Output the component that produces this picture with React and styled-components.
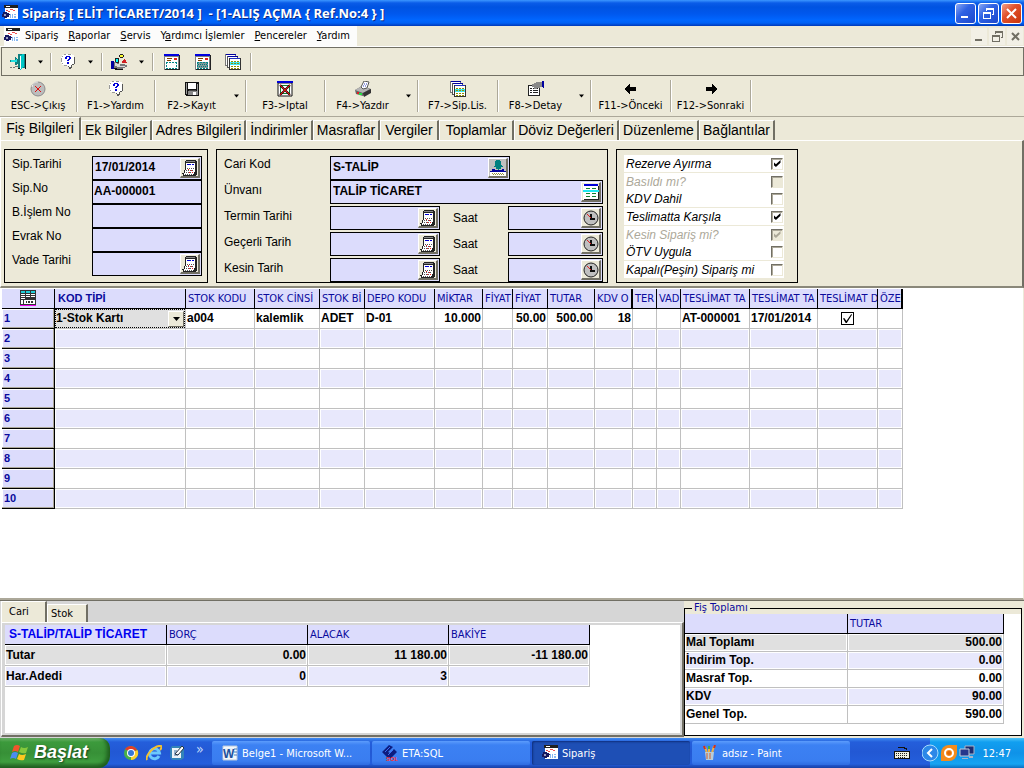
import { useState } from "react"
import styled, { createGlobalStyle, css } from "styled-components"

const GlobalStyle = createGlobalStyle`
*{
box-sizing:border-box;
}
body{
margin:0;
background-color:#ece9d8;
font-family:"DejaVu Sans Condensed", Tahoma, sans-serif;
font-size:11px;
color:black;
}
button, input, select{
font:inherit;
color:inherit;
margin:0;
padding:0;
border-radius:0;
}
svg{
display:block;
flex:none;
}
`

const arial = css`
font-family:"Liberation Sans", Arial, sans-serif;
`

const Window = styled.div`
min-height:100vh;
display:flex;
flex-direction:column;
`

/* title bar */
const TitleBar = styled.header`
height:26px;
display:flex;
align-items:center;
gap:4px;
padding:0 2px;
background:linear-gradient(#3c96ff 0, #0a5ce8 3px, #0053e1 7px, #0058ee 14px, #0066ff 20px, #0061f5 23px, #0038b8 26px);
`
const Title = styled.h1`
flex:1;
margin:0;
font-family:"Open Sans", "Trebuchet MS", sans-serif;
font-size:13px;
font-weight:700;
line-height:20px;
color:white;
white-space:pre;
text-shadow:1px 1px #0a2a86;
`
const WindowButtons = styled.div`
display:flex;
gap:2px;
`
const WindowButton = styled.button`
width:21px;
height:21px;
display:flex;
align-items:center;
justify-content:center;
border:1px solid white;
border-radius:3px;
background:${props=>props.$close
    ? "linear-gradient(135deg, #f0a08c, #e2522c 40%, #c8350c)"
    : "linear-gradient(135deg, #8aa8f4, #2f62e4 40%, #1c48cc)"};
`

/* menu */
const MenuBar = styled.nav`
height:21px;
display:flex;
align-items:center;
justify-content:space-between;
border-bottom:1px solid white;
padding-right:1px;
`
const MenuList = styled.div`
height:20px;
display:flex;
align-items:center;
gap:10px;
margin-left:4px;
padding-right:7px;
background-color:#fcfcfb;
`
const MenuItem = styled.button`
display:flex;
align-items:center;
gap:5px;
border:none;
background:none;
line-height:16px;
white-space:nowrap;
`
const ChildButton = styled.button`
width:16px;
height:17px;
display:flex;
align-items:center;
justify-content:center;
border:none;
background-color:#f2f0e6;
`
const ChildButtons = styled.div`
display:flex;
gap:2px;
`

/* toolbars */
const SmallToolbar = styled.div`
height:29px;
display:flex;
align-items:center;
margin-left:1px;
border:1px solid #716f64;
`
const SmallTool = styled.div`
width:${props=>props.$w}px;
height:18px;
display:flex;
align-items:center;
justify-content:center;
gap:12px;
border-right:1px solid #aca899;
box-shadow:${props=>props.$line ? "1px 0 white" : "none"};
border-right-color:${props=>props.$line ? "#aca899" : "transparent"};
`
const PlainButton = styled.button`
display:flex;
border:none;
background:none;
`
const BigToolbar = styled.div`
height:41px;
display:flex;
align-items:flex-start;
padding-top:4px;
border-bottom:1px solid #aca899;
`
const BigTool = styled.div`
width:${props=>props.$w}px;
height:32px;
display:flex;
align-items:center;
border-right:1px solid #aca899;
box-shadow:1px 0 white;
`
const ToolButton = styled.button`
flex:1;
height:32px;
display:flex;
flex-direction:column;
align-items:center;
gap:2px;
padding-top:1px;
border:none;
background:none;
line-height:14px;
white-space:nowrap;
`
const DropButton = styled(PlainButton)`
padding:4px 6px;
`

/* page tabs */
const Tabs = styled.div`
height:23px;
display:flex;
align-items:flex-end;
${arial}
font-size:14px;
`
const Tab = styled.button`
width:${props=>props.$w}px;
height:${props=>props.$active ? 23 : 20}px;
padding-bottom:${props=>props.$active ? 2 : 1}px;
border:none;
border-top:1px solid white;
border-left:1px solid white;
border-right:2px solid #716f64;
background-color:#ece9d8;
white-space:nowrap;
`
const FormPage = styled.form`
display:flex;
align-items:flex-start;
gap:8px;
padding:8px 3px 3px;
border:1px solid white;
border-right:2px solid #716f64;
border-bottom:2px solid #8a887a;
${arial}
font-size:12px;
`
const Group = styled.div`
height:134px;
padding:${props=>props.$pad};
border:1px solid black;
`
const Line = styled.div`
height:24px;
display:flex;
margin-bottom:${props=>props.$gap||0}px;
`
const Label = styled.label`
width:${props=>props.$w}px;
line-height:${props=>props.$lh||16}px;
font-size:12px;
padding-left:${props=>props.$indent||0}px;
white-space:nowrap;
`
const Field = styled.div`
width:${props=>props.$w}px;
height:24px;
display:flex;
border:1px solid black;
background-color:#dcdcfc;
`
const FieldInput = styled.input`
flex:1;
min-width:0;
padding:0 0 2px ${props=>props.$indent||2}px;
border:none;
outline:none;
background:none;
font-weight:bold;
`
const FieldButton = styled.button`
width:20px;
height:20px;
margin:1px 1px 0 0;
display:flex;
align-items:center;
justify-content:center;
border:1px solid white;
border-right:2px solid #716f64;
border-bottom:2px solid #716f64;
background-color:${props=>props.$grey ? "#c0c0c0" : "#ece9d8"};
`
const OptionList = styled.div`
width:160px;
`
const Option = styled.label`
height:${props=>props.$line ? 18 : 17}px;
display:flex;
align-items:center;
justify-content:space-between;
padding:0 1px 0 2px;
border-bottom:${props=>props.$line ? "1px solid #ece9d8" : "none"};
background-color:white;
font-style:italic;
font-size:12px;
color:${props=>props.$off ? "#aca899" : "black"};
`
const CheckBox = styled.input`
appearance:none;
width:12px;
height:12px;
display:flex;
align-items:center;
justify-content:center;
border:1px solid #ece9d8;
border-top:1px solid #716f64;
border-left:1px solid #716f64;
box-shadow:inset 1px 1px #aca899;
background-color:${props=>props.disabled ? "#ece9d8" : "white"};
&:checked::before{
content:"";
width:7px;
height:7px;
background-color:${props=>props.disabled ? "#aca899" : "black"};
clip-path:polygon(0 30%, 35% 62%, 100% 0, 100% 40%, 35% 100%, 0 70%);
}
`

/* order lines */
const GridArea = styled.main`
flex:1;
padding:1px 0 0 2px;
border-right:1px solid #ece9d8;
border-bottom:2px solid #aca899;
background-color:white;
overflow:auto;
`
const Table = styled.table`
width:${props=>props.$w}px;
table-layout:fixed;
border-collapse:separate;
border-spacing:0;
${arial}
font-size:12px;
font-weight:bold;
`
const Head = styled.th`
height:${props=>props.$h}px;
padding:0 0 1px ${props=>props.$indent||2}px;
border-right:${props=>props.$thick ? 2 : 1}px solid black;
border-bottom:1px solid black;
background-color:#dcdcfc;
font-family:"DejaVu Sans Condensed", Tahoma, sans-serif;
font-size:11px;
font-weight:normal;
text-align:left;
color:#0a0a9c;
white-space:nowrap;
overflow:hidden;
`
const BoldHead = styled(Head)`
${arial}
font-size:${props=>props.$size||11}px;
font-weight:bold;
color:${props=>props.$blue||"#0a0a9c"};
`
const RowHead = styled.th`
height:20px;
padding:0 0 2px 2px;
border-right:1px solid black;
border-bottom:1px solid black;
box-shadow:inset -1px -1px #aca899, inset 1px 1px white;
background-color:#dcdcfc;
font-size:11px;
text-align:left;
color:#0a0a9c;
`
const Cell = styled.td`
height:${props=>props.$h||20}px;
padding:0 1px;
border-right:1px solid #c0c0c0;
border-bottom:1px solid #c0c0c0;
box-shadow:inset 0 0 0 1px white;
background-color:${props=>props.$bg||"white"};
text-align:${props=>props.$align||"left"};
line-height:15px;
white-space:nowrap;
overflow:hidden;
`
const TypeCell = styled(Cell)`
padding:0;
box-shadow:none;
`
const TypeWrap = styled.div`
height:19px;
display:flex;
align-items:center;
border:1px dotted black;
background-color:#e0e0e0;
`
const TypeSelect = styled.select`
flex:1;
min-width:0;
appearance:none;
border:none;
outline:none;
background:none;
line-height:15px;
`
const SelectArrow = styled.span`
width:16px;
height:16px;
display:flex;
align-items:center;
justify-content:center;
border:1px solid white;
border-right-color:#716f64;
border-bottom-color:#716f64;
background-color:#ece9d8;
pointer-events:none;
`
const LineCheck = styled(CheckBox)`
width:13px;
height:13px;
margin:0 auto;
border:1px solid black;
box-shadow:none;
&:checked::before{
width:9px;
height:9px;
clip-path:polygon(0 50%, 14% 45%, 38% 78%, 92% 0, 100% 8%, 42% 100%, 30% 100%);
}
`

/* bottom panels */
const Bottom = styled.section`
height:138px;
display:flex;
border-top:1px solid #716f64;
`
const AccountPanel = styled.div`
flex:1;
min-width:0;
display:flex;
flex-direction:column;
padding-left:1px;
background-color:#d6d6d6;
`
const AccountTabs = styled.div`
height:21px;
display:flex;
align-items:flex-end;
`
const AccountTab = styled.button`
width:${props=>props.$w}px;
height:${props=>props.$active ? 21 : 18}px;
padding:0 0 ${props=>props.$active ? 2 : 0}px ${props=>props.$active ? 7 : 3}px;
border:none;
border-top:1px solid white;
border-left:1px solid white;
border-right:2px solid #716f64;
background-color:#ece9d8;
text-align:left;
`
const AccountPage = styled.div`
flex:1;
margin-bottom:1px;
border:1px solid white;
border-right:2px solid #716f64;
border-bottom:2px solid #716f64;
background-color:#d6d6d6;
padding:2px 2px 2px 3px;
`
const AccountSheet = styled.div`
height:100%;
background-color:white;
`
const Totals = styled.fieldset`
width:338px;
min-width:0;
display:flex;
flex-direction:column;
margin:1px 2px 2px 0;
padding:0;
border:1px solid black;
background-color:#ece9d8;
`
const Legend = styled.legend`
margin-left:7px;
padding:0 2px;
line-height:12px;
color:#0a0a9c;
background-color:#ece9d8;
`
const TotalsSheet = styled.div`
flex:1;
background-color:white;
`

/* taskbar */
const Taskbar = styled.footer`
height:30px;
display:flex;
align-items:center;
color:white;
background:linear-gradient(#3f8cf3 0, #245edb 4px, #2258d4 14px, #245edc 26px, #1941a5 30px);
`
const StartButton = styled.button`
width:110px;
height:30px;
display:flex;
align-items:center;
gap:4px;
padding:0 0 1px 10px;
border:none;
border-radius:0 10px 12px 0;
background:linear-gradient(#6fb56b 0, #3c9a3c 4px, #379037 15px, #3f9e3f 24px, #2a6e2a 30px);
box-shadow:inset -3px -2px 4px #1d5c1d;
${arial}
font-size:18px;
font-weight:bold;
font-style:italic;
text-shadow:1px 1px 2px #173f17;
`
const QuickLaunch = styled.div`
width:102px;
display:flex;
align-items:center;
gap:7px;
padding-left:13px;
`
const More = styled(PlainButton)`
padding:0 0 8px 4px;
font-size:14px;
line-height:16px;
color:#c4dcfc;
`
const TaskList = styled.div`
flex:1;
display:flex;
gap:2px;
`
const Task = styled.button`
width:158px;
height:24px;
display:flex;
align-items:center;
gap:4px;
padding-left:10px;
border:none;
border-radius:2px;
background:${props=>props.$active ? "#1e4fb5" : "linear-gradient(#5c9cfc, #3c81f3 4px, #3a7df0 20px, #2f6ce0)"};
box-shadow:${props=>props.$active ? "inset 1px 1px 2px #0f2f7c" : "none"};
white-space:nowrap;
`
const Tray = styled.div`
height:30px;
display:flex;
align-items:center;
gap:2px;
padding-right:13px;
margin-left:20px;
background:linear-gradient(#4fc4f8 0, #119ff0 4px, #0f92e8 15px, #15a4f2 26px, #0c6fc0 30px);
`
const Chevron = styled(PlainButton)`
margin-left:-8px;
`
const Clock = styled.time`
margin-left:5px;
`

/* icons */
const Icon = ({ s = 16, children }) => (
    <svg width={s} height={s} viewBox="0 0 16 16" shapeRendering="crispEdges" aria-hidden="true">{children}</svg>
)
const AppIcon = () => (
    <Icon>
        <path d="M3 1H16V14H3Z" fill="#fff"/><path d="M2 0H16V3H2Z" fill="#202020"/><path d="M4 1H8V2H4Z" fill="#fff"/>
        <path d="M4 5H6V6H4ZM8 4H11V5H8ZM6 6H8V7H6ZM11 5H13V6H11Z" fill="#f05050"/>
        <path d="M8 9H9V13H8ZM10 9H11V13H10ZM12 9H14V10H12ZM12 11H14V13H12Z" fill="#88b8f0"/>
        <path d="M1 7H5V8H7V9H8V10H7V12H5V13H2V12H0V9H1Z" fill="#181860"/><path d="M2 9H4V11H2Z" fill="#a0a0c0"/>
    </Icon>
)
const DoorIcon = () => (
    <Icon>
        <path d="M8 0H15V14H8Z" fill="#108080"/><path d="M15 0H16V15H15ZM8 14H12V15H8Z" fill="#111"/>
        <path d="M10 1L14 0V13L10 16Z" fill="#00c8c8"/><path d="M10 2H11V15H10Z" fill="#fff"/>
        <path d="M0 6H5V3H6V4H7V5H8V6H9V7H10V8H9V9H8V10H7V11H5V8H0Z" fill="#108080"/><path d="M1 6H6V5H7V8H1Z" fill="#20e0e0"/>
        <path d="M0 13H2V14H0ZM3 13H5V14H3ZM5 12H8V13H5Z" fill="#777"/>
    </Icon>
)
const HelpIcon = () => (
    <Icon>
        <path d="M4 0H12V1H14V3H15V9H14V11H12V12H11V14H9V13H8V12H4V11H2V9H1V3H2V1H4Z" fill="#fff"/>
        <path d="M4 0H6V1H4ZM8 0H11V1H8ZM2 2H3V3H2ZM1 4H2V8H1ZM2 9H3V10H2ZM4 11H7V12H4Z" fill="#999"/>
        <path d="M14 3H15V10H14ZM12 10H14V11H12ZM11 11H12V14H11ZM9 13H11V15H9ZM8 12H9V13H8Z" fill="#555"/>
        <path d="M6 2H10V3H11V5H10V6H9V7H7V6H8V5H9V3H7V5H5V3H6ZM7 8H9V10H7Z" fill="#0000d8"/>
    </Icon>
)
const HandIcon = () => (
    <Icon>
        <path d="M9 0H12V1H13V3H12V4H9V3H8V1H9Z" fill="#222"/><path d="M9 1H12V3H9Z" fill="#ffff30"/>
        <path d="M4 4H8V9H4Z" fill="#222"/><path d="M5 5H7V8H5Z" fill="#00ffff"/>
        <path d="M13 5H14V6H15V8H16V9H11V7H12V6H13Z" fill="#d02020"/>
        <path d="M0 7H3V15H0Z" fill="#0000a0"/><path d="M3 8H5V9H8V10H14V11H16V13H14V14H12V15H5V14H3Z" fill="#777"/>
        <path d="M4 9H6V10H9V12H14V13H6V12H4Z" fill="#d8d8d8"/><path d="M3 14H6V15H12V16H4V15H3Z" fill="#111"/>
    </Icon>
)
const FormIcon = ({ filled }) => (
    <Icon>
        <path d="M0 0H15V16H0Z" fill="#808080"/><path d="M1 3H14V15H1Z" fill="#fff"/><path d="M0 0H15V2H0Z" fill="#0000e0"/>
        <path d="M15 1H16V16H15ZM1 15H16V16H1Z" fill="#222"/><path d="M3 4H8V5H3ZM3 6H7V7H3Z" fill="#804000"/><path d="M10 4H13V6H10Z" fill="#e02020"/>
        <path d="M2 8H13V14H2Z" fill={filled ? "#809898" : "#fff"}/><path d="M2 8H13M2 14H13M2.500 8V14M12.500 8V14" stroke="#008888" strokeDasharray="2 1"/>
        {filled&&<path d="M3 10H12M4 12H12" stroke="#008080" strokeDasharray="1 1"/>}
    </Icon>
)
const WindowsIcon = () => (
    <Icon>
        <path d="M0 0H11V12H0Z" fill="#777"/><path d="M1 1H10V11H1Z" fill="#fff"/><path d="M1 0H11V1H1Z" fill="#0000a0"/>
        <path d="M2 2H13V14H2Z" fill="#555"/><path d="M3 3H12V13H3Z" fill="#fff"/><path d="M3 2H13V3H3Z" fill="#0000a0"/>
        <path d="M4 4H16V16H4Z" fill="#333"/><path d="M5 5H15V15H5Z" fill="#fff"/><path d="M5 4H15V5H5Z" fill="#2030c0"/><path d="M5 8H15V11H5Z" fill="#40e8f0"/>
        <path d="M6 7H14M6 9.500H14M6 12H14M6 14H14" stroke="#909000" strokeDasharray="2 1"/>
    </Icon>
)
const StopIcon = () => (
    <svg width="16" height="16" viewBox="0 0 16 16" aria-hidden="true">
        <circle cx="8" cy="8" r="7" fill="#bdbdbd" stroke="#8c8c8c"/><path d="M2 6A6 6 0 0 1 8 1" stroke="#eee" fill="none"/>
        <path d="M5 5L11 11M11 5L5 11" stroke="#e01010" strokeWidth="1"/>
    </svg>
)
const DiskIcon = () => (
    <Icon>
        <path d="M1 1H15V15H2V14H1Z" fill="#111"/><path d="M2 2H3V13H2ZM13 3H14V14H13Z" fill="#999"/><path d="M4 2H12V8H4Z" fill="#fff"/>
        <path d="M4 10H13V14H4Z" fill="#888"/><path d="M9 11H12V14H9Z" fill="#fff"/><path d="M5 9H12V10H5Z" fill="#444"/>
    </Icon>
)
const CancelIcon = () => (
    <svg width="16" height="16" viewBox="0 0 16 16" aria-hidden="true">
        <path d="M1 2H15V15H1Z" fill="#fff" stroke="#111"/><path d="M0 0H16V2H0Z" fill="#0000d8"/>
        <path d="M3.500 4.500H12.500V12.500H3.500Z" fill="none" stroke="#108030"/><path d="M3 4L13 14M13 4L3 14" stroke="#300" strokeWidth="2"/><path d="M3 4L13 14M13 4L3 14" stroke="#e01010" strokeWidth="1"/>
    </svg>
)
const PrinterIcon = () => (
    <svg width="16" height="16" viewBox="0 0 16 16" aria-hidden="true">
        <path d="M0 9L7 5L16 8V11L8 15L1 13Z" fill="#666"/><path d="M0 9L7 5L15 8L8 12Z" fill="#b4b4b4"/>
        <path d="M6 6L9 0L14 1L12 7L8 8Z" fill="#fff" stroke="#555"/><path d="M9 3H12M8 5H11" stroke="#3040c0" strokeDasharray="1 1"/>
        <path d="M8 12L16 8V12L9 16Z" fill="#333"/><path d="M2 11H4V13H2Z" fill="#e02020"/><path d="M4 12H7V14H4Z" fill="#20e040"/>
    </svg>
)
const DetailIcon = () => (
    <Icon>
        <path d="M0 4H12V15H0Z" fill="#222"/><path d="M1 5H11V14H1Z" fill="#fff"/><path d="M2 7H4V8H2ZM5 7H10V8H5ZM2 9H4V10H2ZM5 9H10V10H5ZM2 11H4V12H2ZM5 11H10V12H5Z" fill="#222"/>
        <path d="M4 3H6V2H8V1H14V6H12V7H9V8H6V6H4Z" fill="#888"/><path d="M14 0H16V7H15V6H14Z" fill="#0000a0"/>
    </Icon>
)
const ArrowIcon = ({ right }) => (
    <Icon>
        <path d={right
            ? "M3 6H9V3H10V4H11V5H12V6H13V7H14V9H13V10H12V11H11V12H10V13H9V10H3Z"
            : "M13 6H7V3H6V4H5V5H4V6H3V7H2V9H3V10H4V11H5V12H6V13H7V10H13Z"}/>
    </Icon>
)
const DownArrow = ({ w = 5 }) => (
    <svg width={w} height="4" viewBox="0 0 7 4" aria-hidden="true"><path d="M0 0H7L3.500 4Z"/></svg>
)
const CalendarIcon = () => (
    <Icon>
        <path d="M4 0H14V1H15V15H14V16H1V14H0V13H2V10H3V1H4Z" fill="#222"/><path d="M4 3H13V9H4Z" fill="#fff"/><path d="M4 1H13V2H4Z" fill="#888"/>
        <path d="M5 4H9V5H5ZM10 4H12V5H10Z" fill="#0000d0"/><path d="M4 9H13V12H12V14H11V15H2V13H3V10H4Z" fill="#fff"/>
        <path d="M5 8.500H13M4 10.500H12M4 12.500H12M3 14.500H11" stroke="#555" strokeDasharray="1 1"/><path d="M6 9H7V10H6ZM9 10H10V11H9ZM7 12H8V13H7ZM10 12H11V13H10Z" fill="#f02020"/>
    </Icon>
)
const ClockIcon = () => (
    <svg width="16" height="16" viewBox="0 0 16 16" aria-hidden="true">
        <circle cx="8" cy="8" r="7" fill="#c0c0c0" stroke="#222"/><path d="M8 4V9H12" stroke="#111" fill="none" strokeWidth="2"/><path d="M4 4L8 8" stroke="#e02020" strokeWidth="1"/>
    </svg>
)
const PullIcon = () => (
    <Icon>
        <path d="M6 0H10V1H11V5H12V6H13V7H11V9H9V10H8V9H6V7H4V6H5V1H6Z" fill="#008080"/>
        <path d="M0 11H16V16H0Z" fill="#fff"/><path d="M2 9H5V10H12V9H14V11H16V12H0V11H2Z" fill="#0000a0"/><path d="M2 13.500H14M3 14.500H14" stroke="#909040" strokeDasharray="1 1"/>
    </Icon>
)
const CardIcon = () => (
    <Icon>
        <path d="M0 0H15V16H0Z" fill="#fff"/><path d="M1 0H15V2H1Z" fill="#0000d8"/><path d="M15 2H16V16H1V15H15Z" fill="#222"/><path d="M0 6H16V8H0Z" fill="#20e8f0"/>
        <path d="M3 4.500H7M9 4.500H13M3 9.500H7M9 9.500H13M3 12.500H7M9 12.500H13" stroke="#108030"/>
    </Icon>
)
const TableIcon = () => (
    <Icon>
        <path d="M0 0H16V15H0Z" fill="#333"/><path d="M1 1H5V3H1ZM6 1H10V3H6ZM11 1H15V3H11Z" fill="#20d0d8"/>
        <path d="M1 4H5V5H1ZM6 4H10V5H6ZM11 4H15V5H11ZM1 6H5V7H1ZM6 6H10V7H6ZM11 6H15V7H11ZM1 8H5V9H1ZM1 10H3V14H1ZM4 10H15V14H4Z" fill="#fff"/>
        <path d="M6 11H7V13H6ZM8 11H10V13H8ZM11 11H13V13H11Z" fill="#333"/><path d="M0 15H16V16H0Z" fill="#f000f0"/>
    </Icon>
)
const FlagIcon = () => (
    <svg width="20" height="18" viewBox="0 0 20 18" aria-hidden="true">
        <path d="M4 2Q7 0 10 2L8 8Q5 6 2 8Z" fill="#f0552c"/><path d="M11 3Q14 5 18 3L16 9Q13 10 9 8Z" fill="#84c83c"/>
        <path d="M2 9Q5 7 8 9L6 15Q3 13 0 15Z" fill="#4c8cf0"/><path d="M9 10Q12 12 16 10L14 16Q10 17 7 15Z" fill="#fcc820"/>
    </svg>
)
const ChromeIcon = () => (
    <svg width="16" height="16" viewBox="0 0 16 16" aria-hidden="true">
        <circle cx="8" cy="8" r="7" fill="#48b048"/><path d="M8 8L2 4A7 7 0 0 1 14 5Z" fill="#e03c2c"/><path d="M8 8L14.500 5A7 7 0 0 1 8 15Z" fill="#f8d030"/>
        <circle cx="8" cy="8" r="4" fill="#fff"/><circle cx="8" cy="8" r="3" fill="#3478d8"/>
    </svg>
)
const ExplorerIcon = () => (
    <svg width="16" height="16" viewBox="0 0 16 16" aria-hidden="true">
        <path d="M13 11A5 5 0 1 1 13.500 8H4" fill="none" stroke="#6cc8fc" strokeWidth="3"/><path d="M1 15C-1 11 8 0 15 1C16 2 15 4 14 5" fill="none" stroke="#f4c030" strokeWidth="2"/>
    </svg>
)
const DesktopIcon = () => (
    <svg width="16" height="16" viewBox="0 0 16 16" aria-hidden="true">
        <path d="M3 1H13L15 4V13L12 15H3L1 12V4Z" fill="#3484b8"/><path d="M3 3H12V13H3Z" fill="#eef4f8"/><path d="M5 6H8M5 8H7M5 10H9" stroke="#4070a0"/><path d="M6 9L13 1L15 3L9 10Z" fill="#fff" stroke="#234"/>
    </svg>
)
const WordIcon = () => (
    <svg width="16" height="16" viewBox="0 0 16 16" aria-hidden="true">
        <path d="M1 1H15V15H1Z" fill="#f4f8fc" stroke="#b8c8dc"/><path d="M12 4H15M12 7H15M12 10H15" stroke="#4878b8"/>
        <path d="M1 3H12V13H1Z" fill="#e8f0fa"/><text x="1" y="13" fontSize="12" fontWeight="bold" fontFamily="Liberation Sans" fill="#20509c">W</text>
    </svg>
)
const EtaIcon = () => (
    <svg width="16" height="16" viewBox="0 0 16 16" aria-hidden="true">
        <path d="M0 7L7 0L11 2L6 7L8 8L12 4L15 7L9 13H6Z" fill="#0c1c80"/><path d="M3 7L8 2M6 10L11 5" stroke="#3c6cf0"/>
        <text x="4" y="16" fontSize="6" fontWeight="bold" fontFamily="Liberation Sans" fill="#ff3030">SQL</text>
    </svg>
)
const PaintIcon = () => (
    <svg width="16" height="16" viewBox="0 0 16 16" aria-hidden="true">
        <path d="M5 8L3 2M7 8V1M10 8L12 1" stroke="#f0b040" strokeWidth="2"/><path d="M3 4L2 1M12 3L13 0" stroke="#d03020" strokeWidth="2"/><path d="M7 4V1" stroke="#40b040" strokeWidth="2"/>
        <path d="M3 7H12L11 15H4Z" fill="#b8ccd8"/><path d="M5 8V14M8 8V14" stroke="#d06030"/>
    </svg>
)
const KeyboardIcon = () => (
    <svg width="16" height="14" viewBox="0 0 16 14" shapeRendering="crispEdges" aria-hidden="true">
        <path d="M4 1H10V2H12V4" stroke="#111" fill="none"/><path d="M0 5H16V13H0Z" fill="#111"/><path d="M1 6H15V12H1Z" fill="#f0f0e0"/>
        <path d="M2 7.500H14M2 9.500H14M4 11.500H12" stroke="#222" strokeDasharray="1 1"/>
    </svg>
)
const ChevronIcon = () => (
    <svg width="17" height="18" viewBox="0 0 17 18" aria-hidden="true">
        <circle cx="8" cy="9" r="8" fill="#2c88e8" stroke="#a8dcfc"/><path d="M10 5L6 9L10 13" stroke="#fff" strokeWidth="2" fill="none"/>
    </svg>
)
const AvastIcon = () => (
    <svg width="16" height="16" viewBox="0 0 16 16" aria-hidden="true">
        <path d="M0 8A8 8 0 0 1 8 0H16V8A8 8 0 0 1 8 16H0Z" fill="#f48c1c"/><circle cx="8" cy="8" r="4" fill="none" stroke="#fff" strokeWidth="2"/><circle cx="8" cy="8" r="2" fill="#e06808"/>
    </svg>
)
const NetworkIcon = () => (
    <svg width="16" height="16" viewBox="0 0 16 16" aria-hidden="true">
        <path d="M6 1H15V9H6Z" fill="#1c2c70" stroke="#a8b4c8"/><path d="M1 4H10V11H1Z" fill="#26388c" stroke="#c4ccd8"/><path d="M3 13H9V14H3ZM10 11H14V13H10Z" fill="#a8b4c8"/>
    </svg>
)
const MinIcon = ({ c }) => (
    <svg width="13" height="13" viewBox="0 0 13 13" aria-hidden="true"><path d="M2 9H9V11H2Z" fill={c}/></svg>
)
const RestoreIcon = ({ c }) => (
    <svg width="13" height="13" viewBox="0 0 13 13" shapeRendering="crispEdges" aria-hidden="true">
        <path d="M4 1H12V8H10V7H11V3H5V4H4ZM1 5H9V12H1ZM2 7V11H8V7Z" fillRule="evenodd" fill={c}/>
    </svg>
)
const CloseIcon = ({ c }) => (
    <svg width="13" height="13" viewBox="0 0 13 13" aria-hidden="true"><path d="M2 2L11 11M11 2L2 11" stroke={c} strokeWidth="2"/></svg>
)
const SmallCloseIcon = () => (
    <svg width="9" height="9" viewBox="0 0 9 9" aria-hidden="true"><path d="M1 1L8 8M8 1L1 8" stroke="#716f64" strokeWidth="2"/></svg>
)

const tools = [
    { text: "ESC->Çıkış", w: 77, icon: <StopIcon/> },
    { text: "F1->Yardım", w: 78, icon: <HelpIcon/> },
    { text: "F2->Kayıt", w: 91, icon: <DiskIcon/>, drop: true },
    { text: "F3->Iptal", w: 79, icon: <CancelIcon/> },
    { text: "F4->Yazdır", w: 93, icon: <PrinterIcon/>, drop: true },
    { text: "F7->Sip.Lis.", w: 80, icon: <WindowsIcon/> },
    { text: "F8->Detay", w: 93, icon: <DetailIcon/>, drop: true },
    { text: "F11->Önceki", w: 80, icon: <ArrowIcon/> },
    { text: "F12->Sonraki", w: 80, icon: <ArrowIcon right/> },
]

const tabs = [
    ["Fiş Bilgileri", 81], ["Ek Bilgiler", 71], ["Adres Bilgileri", 94], ["İndirimler", 67], ["Masraflar", 67],
    ["Vergiler", 59], ["Toplamlar", 75], ["Döviz Değerleri", 105], ["Düzenleme", 80], ["Bağlantılar", 76],
]

const orderFields = [
    { label: "Sip.Tarihi", value: "17/01/2014", date: true },
    { label: "Sip.No", value: "AA-000001" },
    { label: "B.İşlem No", value: "" },
    { label: "Evrak No", value: "" },
    { label: "Vade Tarihi", value: "", date: true },
]

const options = [
    { text: "Rezerve Ayırma", on: true, line: true },
    { text: "Basıldı mı?", off: true },
    { text: "KDV Dahil", line: true },
    { text: "Teslimatta Karşıla", on: true, line: true },
    { text: "Kesin Sipariş mi?", on: true, off: true },
    { text: "ÖTV Uygula", line: true },
    { text: "Kapalı(Peşin) Sipariş mi" },
]

const columns = [
    { head: "STOK KODU", w: 69, value: "a004" },
    { head: "STOK CİNSİ", w: 65, value: "kalemlik" },
    { head: "STOK Bİ", w: 45, value: "ADET" },
    { head: "DEPO KODU", w: 70, value: "D-01" },
    { head: "MİKTAR", w: 48, value: "10.000", align: "right" },
    { head: "FİYAT", w: 30 },
    { head: "FİYAT", w: 35, value: "50.00", align: "right" },
    { head: "TUTAR", w: 47, value: "500.00", align: "right" },
    { head: "KDV O", w: 38, value: "18", align: "right", thick: true },
    { head: "TER", w: 24 },
    { head: "VAD", w: 24 },
    { head: "TESLİMAT TA", w: 69, value: "AT-000001" },
    { head: "TESLİMAT TA", w: 68, value: "17/01/2014" },
    { head: "TESLİMAT D", w: 60, check: true },
    { head: "ÖZE", w: 25, thick: true },
]

const totals = [
    ["Mal Toplamı", "500.00", "#e0e0e0"],
    ["İndirim Top.", "0.00", "#e8e8fc"],
    ["Masraf Top.", "0.00", "white"],
    ["KDV", "90.00", "#e8e8fc"],
    ["Genel Top.", "590.00", "white"],
]

function DateField({ id, w, value, indent }) {
    return(
        <Field $w={w}>
            <FieldInput id={id} defaultValue={value} $indent={indent}/>
            <FieldButton type="button" aria-label="Takvim"><CalendarIcon/></FieldButton>
        </Field>
    )
}

function OrderForm() {
    return(
        <FormPage>
            <Group $pad="6px 5px 0 7px">
                {orderFields.map((field, i)=>(
                    <Line key={field.label}>
                        <Label htmlFor={`order${i}`} $w={80}>{field.label}</Label>
                        {field.date
                            ? <DateField id={`order${i}`} w={110} value={field.value}/>
                            : <Field $w={110}><FieldInput id={`order${i}`} defaultValue={field.value} $indent={1}/></Field>}
                    </Line>
                ))}
            </Group>
            <Group $pad="6px 4px 0 7px">
                <Line>
                    <Label htmlFor="code" $w={106}>Cari Kod</Label>
                    <Field $w={180}>
                        <FieldInput id="code" defaultValue="S-TALİP"/>
                        <FieldButton type="button" $grey aria-label="Cari seç"><PullIcon/></FieldButton>
                    </Field>
                </Line>
                <Line $gap={2}>
                    <Label htmlFor="name" $w={106} $lh={20}>Ünvanı</Label>
                    <Field $w={273}>
                        <FieldInput id="name" defaultValue="TALİP TİCARET"/>
                        <FieldButton type="button" aria-label="Cari kart"><CardIcon/></FieldButton>
                    </Field>
                </Line>
                {["Termin Tarihi", "Geçerli Tarih", "Kesin Tarih"].map((text, i)=>(
                    <Line key={text} $gap={2}>
                        <Label htmlFor={`date${i}`} $w={106} $lh={20}>{text}</Label>
                        <DateField id={`date${i}`} w={110} value=""/>
                        <Label htmlFor={`time${i}`} $w={68} $lh={24} $indent={13}>Saat</Label>
                        <Field $w={95}>
                            <FieldInput id={`time${i}`}/>
                            <FieldButton type="button" aria-label="Saat seç"><ClockIcon/></FieldButton>
                        </Field>
                    </Line>
                ))}
            </Group>
            <Group $pad="5px 13px 0 7px">
                <OptionList>
                    {options.map(option=>(
                        <Option key={option.text} $line={option.line} $off={option.off}>
                            {option.text}
                            <CheckBox type="checkbox" defaultChecked={option.on} disabled={option.off}/>
                        </Option>
                    ))}
                </OptionList>
            </Group>
        </FormPage>
    )
}

function OrderLines() {
    return(
        <GridArea>
            <Table $w={901}>
                <colgroup>
                    <col width="53"/>
                    <col width="131"/>
                    {columns.map((column, i)=><col key={i} width={column.w}/>)}
                </colgroup>
                <thead>
                    <tr>
                        <Head $h={20} $indent={18}><TableIcon/></Head>
                        <BoldHead $h={20} $indent={3}>KOD TİPİ</BoldHead>
                        {columns.map((column, i)=><Head key={i} $h={20} $thick={column.thick}>{column.head}</Head>)}
                    </tr>
                </thead>
                <tbody>
                    {[1, 2, 3, 4, 5, 6, 7, 8, 9, 10].map(row=>{
                        const bg = row%2===0 ? "#e8e8fc" : "white"
                        return(
                            <tr key={row}>
                                <RowHead>{row}</RowHead>
                                {row===1
                                    ? <TypeCell>
                                        <TypeWrap>
                                            <TypeSelect aria-label="Kod tipi"><option>1-Stok Kartı</option></TypeSelect>
                                            <SelectArrow><DownArrow w={7}/></SelectArrow>
                                        </TypeWrap>
                                    </TypeCell>
                                    : <Cell $bg={bg}/>}
                                {columns.map((column, i)=>(
                                    <Cell key={i} $bg={bg} $align={column.align}>
                                        {row===1&&column.value}
                                        {row===1&&column.check&&<LineCheck type="checkbox" defaultChecked aria-label="Teslimat"/>}
                                    </Cell>
                                ))}
                            </tr>
                        )
                    })}
                </tbody>
            </Table>
        </GridArea>
    )
}

function Summary() {
    const [tab, setTab] = useState("Cari")
    return(
        <Bottom>
            <AccountPanel>
                <AccountTabs>
                    <AccountTab $w={46} $active={tab==="Cari"} onClick={()=>setTab("Cari")}>Cari</AccountTab>
                    <AccountTab $w={41} $active={tab==="Stok"} onClick={()=>setTab("Stok")}>Stok</AccountTab>
                </AccountTabs>
                <AccountPage>
                    <AccountSheet>
                        <Table $w={585}>
                            <colgroup><col width="162"/><col width="141"/><col width="141"/><col width="141"/></colgroup>
                            <thead>
                                <tr>
                                    <BoldHead $h={20} $indent={4} $size={12} $blue="#0000f0">S-TALİP/TALİP TİCARET</BoldHead>
                                    <Head $h={20}>BORÇ</Head>
                                    <Head $h={20}>ALACAK</Head>
                                    <Head $h={20}>BAKİYE</Head>
                                </tr>
                            </thead>
                            <tbody>
                                <tr>
                                    <Cell $h={21} $bg="#e0e0e0">Tutar</Cell>
                                    <Cell $h={21} $bg="#e0e0e0" $align="right">0.00</Cell>
                                    <Cell $h={21} $bg="#e0e0e0" $align="right">11 180.00</Cell>
                                    <Cell $h={21} $bg="#e0e0e0" $align="right">-11 180.00</Cell>
                                </tr>
                                <tr>
                                    <Cell $h={21} $bg="#e8e8fc">Har.Adedi</Cell>
                                    <Cell $h={21} $bg="#e8e8fc" $align="right">0</Cell>
                                    <Cell $h={21} $bg="#e8e8fc" $align="right">3</Cell>
                                    <Cell $h={21} $bg="#e8e8fc"/>
                                </tr>
                            </tbody>
                        </Table>
                    </AccountSheet>
                </AccountPage>
            </AccountPanel>
            <Totals>
                <Legend>Fiş Toplamı</Legend>
                <TotalsSheet>
                    <Table $w={319}>
                        <colgroup><col width="163"/><col width="156"/></colgroup>
                        <thead>
                            <tr><Head $h={20}/><Head $h={20}>TUTAR</Head></tr>
                        </thead>
                        <tbody>
                            {totals.map(([text, value, bg])=>(
                                <tr key={text}>
                                    <Cell $h={18} $bg={bg}>{text}</Cell>
                                    <Cell $h={18} $bg={bg} $align="right">{value}</Cell>
                                </tr>
                            ))}
                        </tbody>
                    </Table>
                </TotalsSheet>
            </Totals>
        </Bottom>
    )
}

function App() {
    const [page, setPage] = useState("Fiş Bilgileri")
    return(
        <Window>
            <GlobalStyle/>
            <TitleBar>
                <AppIcon/>
                <Title>{"Sipariş [ ELİT TİCARET/2014 ]  - [1-ALIŞ AÇMA { Ref.No:4 } ]"}</Title>
                <WindowButtons>
                    <WindowButton aria-label="Küçült"><MinIcon c="white"/></WindowButton>
                    <WindowButton aria-label="Geri yükle"><RestoreIcon c="white"/></WindowButton>
                    <WindowButton $close aria-label="Kapat"><CloseIcon c="white"/></WindowButton>
                </WindowButtons>
            </TitleBar>
            <MenuBar>
                <MenuList>
                    <MenuItem><AppIcon/>Sipariş</MenuItem>
                    <MenuItem><span><u>R</u>aporlar</span></MenuItem>
                    <MenuItem><span><u>S</u>ervis</span></MenuItem>
                    <MenuItem><span>Y<u>a</u>rdımcı İşlemler</span></MenuItem>
                    <MenuItem><span><u>P</u>encereler</span></MenuItem>
                    <MenuItem><span><u>Y</u>ardım</span></MenuItem>
                </MenuList>
                <ChildButtons>
                    <ChildButton aria-label="Küçült"><MinIcon c="#716f64"/></ChildButton>
                    <ChildButton aria-label="Geri yükle"><RestoreIcon c="#716f64"/></ChildButton>
                    <ChildButton aria-label="Kapat"><SmallCloseIcon/></ChildButton>
                </ChildButtons>
            </MenuBar>
            <SmallToolbar>
                <SmallTool $w={49} $line><PlainButton aria-label="Çıkış"><DoorIcon/></PlainButton><PlainButton aria-label="Çıkış menüsü"><DownArrow/></PlainButton></SmallTool>
                <SmallTool $w={51} $line><PlainButton aria-label="Yardım"><HelpIcon/></PlainButton><PlainButton aria-label="Yardım menüsü"><DownArrow/></PlainButton></SmallTool>
                <SmallTool $w={51} $line><PlainButton aria-label="Servis"><HandIcon/></PlainButton><PlainButton aria-label="Servis menüsü"><DownArrow/></PlainButton></SmallTool>
                <SmallTool $w={38}><PlainButton aria-label="Form"><FormIcon/></PlainButton></SmallTool>
                <SmallTool $w={24}><PlainButton aria-label="Dolu form"><FormIcon filled/></PlainButton></SmallTool>
                <SmallTool $w={36} $line><PlainButton aria-label="Pencereler"><WindowsIcon/></PlainButton></SmallTool>
            </SmallToolbar>
            <BigToolbar>
                {tools.map(tool=>(
                    <BigTool key={tool.text} $w={tool.w}>
                        <ToolButton>{tool.icon}{tool.text}</ToolButton>
                        {tool.drop&&<DropButton aria-label={`${tool.text} menüsü`}><DownArrow/></DropButton>}
                    </BigTool>
                ))}
            </BigToolbar>
            <Tabs>
                {tabs.map(([text, w])=>(
                    <Tab key={text} $w={w} $active={page===text} onClick={()=>setPage(text)}>{text}</Tab>
                ))}
            </Tabs>
            <OrderForm/>
            <OrderLines/>
            <Summary/>
            <Taskbar>
                <StartButton><FlagIcon/>Başlat</StartButton>
                <QuickLaunch>
                    <PlainButton aria-label="Chrome"><ChromeIcon/></PlainButton>
                    <PlainButton aria-label="Explorer"><ExplorerIcon/></PlainButton>
                    <PlainButton aria-label="Masaüstü"><DesktopIcon/></PlainButton>
                    <More>»</More>
                </QuickLaunch>
                <TaskList>
                    <Task><WordIcon/>Belge1 - Microsoft W...</Task>
                    <Task><EtaIcon/>ETA:SQL</Task>
                    <Task $active><AppIcon/>Sipariş</Task>
                    <Task><PaintIcon/>adsız - Paint</Task>
                </TaskList>
                <KeyboardIcon/>
                <Tray>
                    <Chevron aria-label="Gizli simgeler"><ChevronIcon/></Chevron>
                    <AvastIcon/>
                    <NetworkIcon/>
                    <Clock>12:47</Clock>
                </Tray>
            </Taskbar>
        </Window>
    )
}

export default App
